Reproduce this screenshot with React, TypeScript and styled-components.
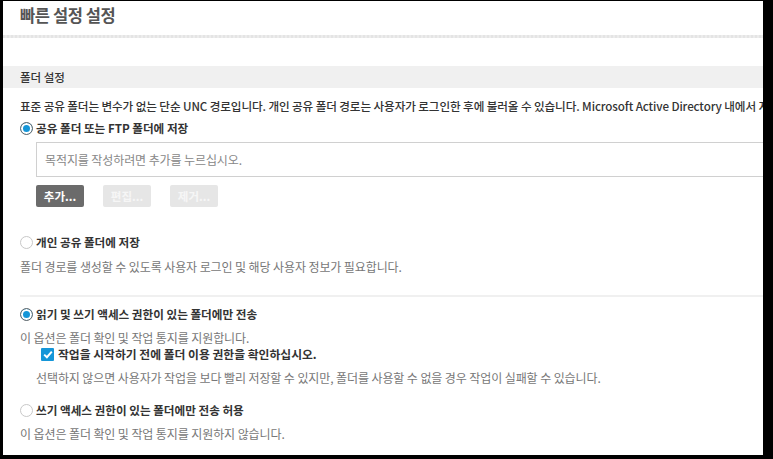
import React from "react";
import styled, { createGlobalStyle } from "styled-components";

const Global = createGlobalStyle`
  html, body { margin: 0; padding: 0; background: #000; }
  body { font-family: "Noto Sans CJK KR", "Noto Sans", sans-serif; }
  * { box-sizing: border-box; }
`;

const Frame = styled.div`
  margin: 1px 10px 0 3px;
  height: 454px;
  background: #fff;
  overflow: hidden;
  display: flex;
  flex-direction: column;
`;

const Title = styled.h1`
  margin: 0;
  padding: 3px 0 0 17px;
  height: 34px;
  font-size: 16.5px;
  font-weight: 700;
  color: #555;
  letter-spacing: -0.4px;
  line-height: 22px;
`;

const Divider = styled.div`
  height: 3px;
  background: repeating-linear-gradient(90deg, #e4e4e4 0 2px, #ececec 2px 4px);
`;

const SectionHeader = styled.div`
  margin-top: 28px;
  height: 22px;
  background: #f0f0f0;
  padding-left: 17px;
  font-size: 11.5px;
  color: #333;
  line-height: 22px;
  font-weight: 500;
`;

const Body = styled.div`
  padding-left: 17px;
  display: flex;
  flex-direction: column;
`;

const Intro = styled.p`
  margin: 10px 0 0;
  font-size: 11.6px;
  letter-spacing: -0.1px;
  line-height: 16px;
  color: #333;
  white-space: nowrap;
  font-weight: 500;
`;

const OptionRow = styled.label<{ $mt: number }>`
  display: flex;
  align-items: center;
  gap: 3px;
  margin-top: ${(p) => p.$mt}px;
  font-size: 11.6px;
  font-weight: 700;
  color: #333;
  line-height: 16px;
  white-space: nowrap;
`;

const Radio = styled.span<{ $on?: boolean }>`
  width: 13px;
  height: 13px;
  border-radius: 50%;
  flex: none;
  border: 1px solid ${(p) => (p.$on ? "#6a6a6a" : "#c8c8c8")};
  background: ${(p) => (p.$on ? "#1596d8" : "#fff")};
  box-shadow: ${(p) => (p.$on ? "inset 0 0 0 2px #fff" : "none")};
`;

const Check = styled.span`
  width: 13px;
  height: 13px;
  flex: none;
  background: #1596d8;
  border-radius: 1px;
  display: flex;
  align-items: center;
  justify-content: center;
`;

const Hint = styled.p<{ $mt: number; $indent?: number }>`
  margin: ${(p) => p.$mt}px 0 0 ${(p) => p.$indent ?? 0}px;
  font-size: 12px;
  letter-spacing: -0.1px;
  line-height: 16px;
  color: #777;
  white-space: nowrap;
`;

const Input = styled.div`
  margin: 6px 0 0 16px;
  height: 35px;
  width: 800px;
  border: 1px solid #d0d0d0;
  padding-left: 8px;
  font-size: 12px;
  letter-spacing: -0.1px;
  color: #888;
  line-height: 33px;
`;

const Buttons = styled.div`
  display: flex;
  gap: 19px;
  margin: 8px 0 0 16px;
`;

const Button = styled.button<{ $primary?: boolean }>`
  width: 48px;
  height: 22px;
  border: none;
  border-radius: 2px;
  padding: 0;
  font-family: inherit;
  font-size: 11.5px;
  font-weight: 700;
  color: ${(p) => (p.$primary ? "#fff" : "#f6f6f6")};
  background: ${(p) => (p.$primary ? "#6b6b6b" : "#e6e6e6")};
`;

const Rule = styled.div`
  margin-top: 20px;
  height: 2px;
  background: #f0f0f0;
`;

const SubRow = styled(OptionRow)`
  margin-left: 21px;
  gap: 4px;
  font-size: 11.8px;
`;

export default function App() {
  return (
    <>
      <Global />
      <Frame>
        <Title>빠른 설정 설정</Title>
        <Divider />
        <SectionHeader>폴더 설정</SectionHeader>
        <Body>
          <Intro>
            표준 공유 폴더는 변수가 없는 단순 UNC 경로입니다. 개인 공유 폴더 경로는 사용자가 로그인한 후에 불러올 수 있습니다. Microsoft Active Directory 내에서 지정된 사용자의 홈 폴더를 사용합니다.
          </Intro>
          <OptionRow $mt={6}>
            <Radio $on />
            공유 폴더 또는 FTP 폴더에 저장
          </OptionRow>
          <Input>목적지를 작성하려면 추가를 누르십시오.</Input>
          <Buttons>
            <Button $primary>추가...</Button>
            <Button>편집...</Button>
            <Button>제거...</Button>
          </Buttons>
          <OptionRow $mt={27}>
            <Radio />
            개인 공유 폴더에 저장
          </OptionRow>
          <Hint $mt={9}>폴더 경로를 생성할 수 있도록 사용자 로그인 및 해당 사용자 정보가 필요합니다.</Hint>
          <Rule />
          <OptionRow $mt={9}>
            <Radio $on />
            읽기 및 쓰기 액세스 권한이 있는 폴더에만 전송
          </OptionRow>
          <Hint $mt={8}>이 옵션은 폴더 확인 및 작업 통지를 지원합니다.</Hint>
          <SubRow $mt={0}>
            <Check>
              <svg width="10" height="9" viewBox="0 0 10 9">
                <path d="M1.2 4.6 L3.9 7.2 L8.8 1.6" stroke="#fff" strokeWidth="2" fill="none" />
              </svg>
            </Check>
            작업을 시작하기 전에 폴더 이용 권한을 확인하십시오.
          </SubRow>
          <Hint $mt={8} $indent={16}>
            선택하지 않으면 사용자가 작업을 보다 빨리 저장할 수 있지만, 폴더를 사용할 수 없을 경우 작업이 실패할 수 있습니다.
          </Hint>
          <OptionRow $mt={16}>
            <Radio />
            쓰기 액세스 권한이 있는 폴더에만 전송 허용
          </OptionRow>
          <Hint $mt={8}>이 옵션은 폴더 확인 및 작업 통지를 지원하지 않습니다.</Hint>
        </Body>
      </Frame>
    </>
  );
}
